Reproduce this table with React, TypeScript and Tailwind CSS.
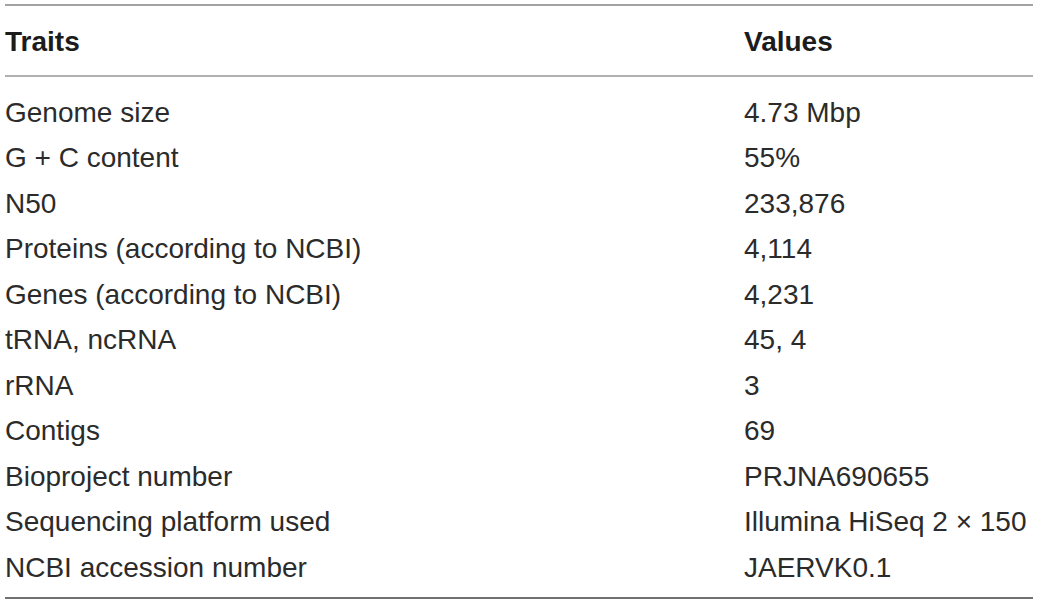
import React from "react";

const rows: [string, string][] = [
  ["Genome size", "4.73 Mbp"],
  ["G + C content", "55%"],
  ["N50", "233,876"],
  ["Proteins (according to NCBI)", "4,114"],
  ["Genes (according to NCBI)", "4,231"],
  ["tRNA, ncRNA", "45, 4"],
  ["rRNA", "3"],
  ["Contigs", "69"],
  ["Bioproject number", "PRJNA690655"],
  ["Sequencing platform used", "Illumina HiSeq 2 × 150"],
  ["NCBI accession number", "JAERVK0.1"],
];

export default function App() {
  return (
    <div className="min-h-screen bg-white px-[5px] pt-[4px] font-['Liberation_Sans',Arial,sans-serif] text-[28px] leading-[45.5px] text-[#2b2b2b]">
      <div className="w-[1028px]">
        <div className="h-[2px] bg-[#a3a3a3]" />
        <div className="grid grid-cols-[739px_1fr] pt-[13px] pb-[10px] font-bold text-[#1c1c1c]">
          <div>Traits</div>
          <div>Values</div>
        </div>
        <div className="h-[2px] bg-[#b0b0b0]" />
        <div className="pt-[13px] pb-[7px]">
          {rows.map(([trait, value]) => (
            <div key={trait} className="grid grid-cols-[739px_1fr]">
              <div>{trait}</div>
              <div>{value}</div>
            </div>
          ))}
        </div>
        <div className="h-[2px] bg-[#707070]" />
      </div>
    </div>
  );
}
